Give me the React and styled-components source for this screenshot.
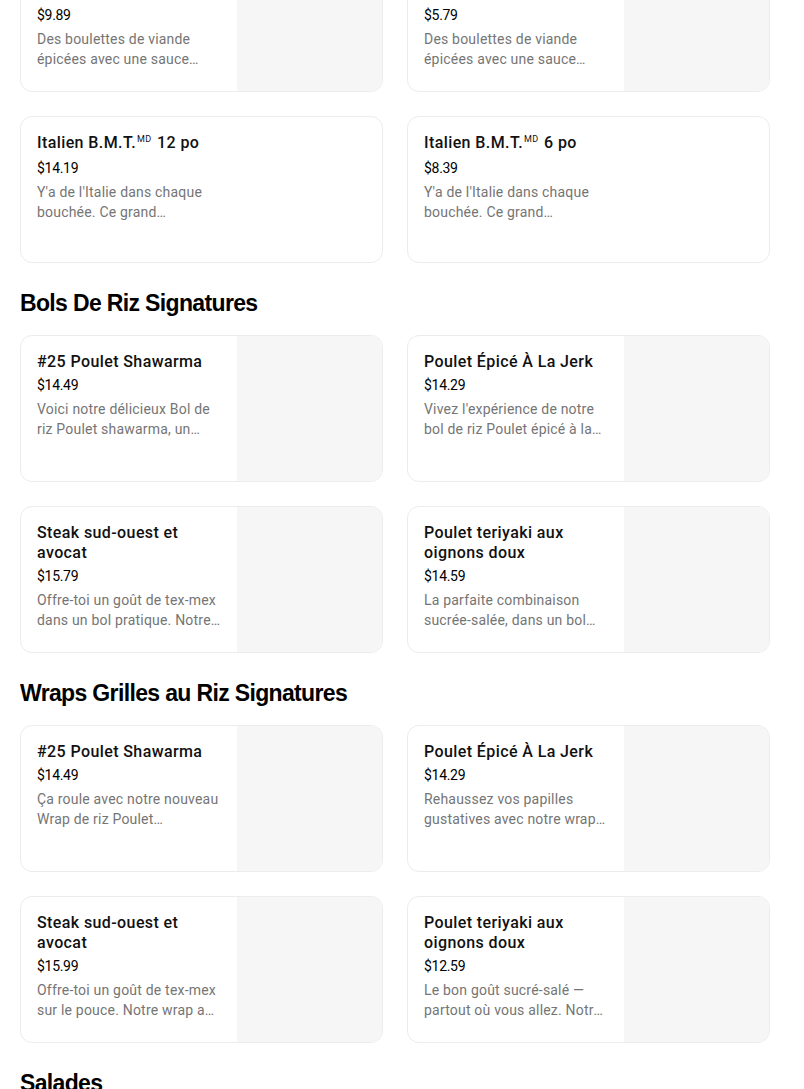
import React from "react";
import styled, { createGlobalStyle } from "styled-components";

const Global = createGlobalStyle`
  html, body { margin: 0; padding: 0; background: #ffffff; }
  body { font-family: "Liberation Sans", Arial, sans-serif; color: #000; }
  * { box-sizing: border-box; }
`;

const Page = styled.main`
  width: 750px;
  margin-left: 20px;
  margin-top: -55px;
  overflow: hidden;
`;

const Section = styled.section`
  display: flex;
  flex-direction: column;
`;

const SectionTitle = styled.h2`
  margin: 0;
  padding-top: 24px;
  margin-bottom: 16px;
  font-family: "Liberation Sans", Arial, sans-serif;
  font-weight: 700;
  font-size: 23px;
  line-height: 32px;
  letter-spacing: -0.65px;
  color: #000;
`;

const Grid = styled.div`
  display: grid;
  grid-template-columns: 363px 363px;
  column-gap: 24px;
  row-gap: 24px;
`;

const Card = styled.article`
  display: flex;
  height: 147px;
  border: 1px solid #ececec;
  border-radius: 12px;
  overflow: hidden;
  background: #fff;
`;

const Info = styled.div`
  width: 216px;
  flex: 0 0 216px;
  padding: 16px;
  display: flex;
  flex-direction: column;
`;

const Title = styled.div`
  font-family: "Roboto", "Liberation Sans", sans-serif;
  font-weight: 500;
  font-size: 16px;
  line-height: 20px;
  letter-spacing: 0.4px;
  color: #111;
`;

const Sup = styled.span`
  font-size: 9px;
  font-weight: 400;
  position: relative;
  top: -6px;
  margin-left: 1px;
  margin-right: 1px;
`;

const Price = styled.div`
  margin-top: 3px;
  font-family: "Roboto", "Liberation Sans", sans-serif;
  font-size: 14px;
  line-height: 20px;
  letter-spacing: -0.3px;
  color: #000;
`;

const Desc = styled.div`
  margin-top: 4px;
  font-family: "Roboto", "Liberation Sans", sans-serif;
  font-size: 14px;
  line-height: 20px;
  letter-spacing: 0.2px;
  color: #757575;
  display: -webkit-box;
  -webkit-line-clamp: 2;
  -webkit-box-orient: vertical;
  overflow: hidden;
`;

const Media = styled.div`
  flex: 1;
  background: #f6f6f6;
`;

function Item({ title, price, desc, image = true }) {
  return (
    <Card>
      <Info>
        <Title>{title}</Title>
        <Price>{price}</Price>
        <Desc>{desc}</Desc>
      </Info>
      {image && <Media />}
    </Card>
  );
}

const bmt = (size) => (
  <>
    Italien B.M.T.<Sup>MD</Sup> {size}
  </>
);

export default function App() {
  return (
    <>
      <Global />
      <Page>
        <Section>
          <Grid>
            <Item
              title="Boulettes de viande marinara 12 po"
              price="$9.89"
              desc="Des boulettes de viande épicées avec une sauce marinara savoureuse et du fromage."
            />
            <Item
              title="Boulettes de viande marinara 6 po"
              price="$5.79"
              desc="Des boulettes de viande épicées avec une sauce marinara savoureuse et du fromage."
            />
            <Item
              title={bmt("12 po")}
              price="$14.19"
              desc="Y'a de l'Italie dans chaque bouchée. Ce grand classique est garni de salami."
              image={false}
            />
            <Item
              title={bmt("6 po")}
              price="$8.39"
              desc="Y'a de l'Italie dans chaque bouchée. Ce grand classique est garni de salami."
              image={false}
            />
          </Grid>
        </Section>
        <Section>
          <SectionTitle>Bols De Riz Signatures</SectionTitle>
          <Grid>
            <Item
              title="#25 Poulet Shawarma"
              price="$14.49"
              desc="Voici notre délicieux Bol de riz Poulet shawarma, un mélange de saveurs."
            />
            <Item
              title="Poulet Épicé À La Jerk"
              price="$14.29"
              desc="Vivez l'expérience de notre bol de riz Poulet épicé à la jerk."
            />
            <Item
              title="Steak sud-ouest et avocat"
              price="$15.79"
              desc="Offre-toi un goût de tex-mex dans un bol pratique. Notre délicieux bol de riz."
            />
            <Item
              title="Poulet teriyaki aux oignons doux"
              price="$14.59"
              desc="La parfaite combinaison sucrée-salée, dans un bol délicieux."
            />
          </Grid>
        </Section>
        <Section>
          <SectionTitle>Wraps Grilles au Riz Signatures</SectionTitle>
          <Grid>
            <Item
              title="#25 Poulet Shawarma"
              price="$14.49"
              desc="Ça roule avec notre nouveau Wrap de riz Poulet shawarma grillé."
            />
            <Item
              title="Poulet Épicé À La Jerk"
              price="$14.29"
              desc="Rehaussez vos papilles gustatives avec notre wrap grillé."
            />
            <Item
              title="Steak sud-ouest et avocat"
              price="$15.99"
              desc="Offre-toi un goût de tex-mex sur le pouce. Notre wrap au riz grillé."
            />
            <Item
              title="Poulet teriyaki aux oignons doux"
              price="$12.59"
              desc="Le bon goût sucré-salé — partout où vous allez. Notre délicieux wrap grillé."
            />
          </Grid>
        </Section>
        <Section>
          <SectionTitle>Salades</SectionTitle>
          <Grid>
            <Item title="Salade" price="$9.99" desc="Salade fraîche." />
          </Grid>
        </Section>
      </Page>
    </>
  );
}
